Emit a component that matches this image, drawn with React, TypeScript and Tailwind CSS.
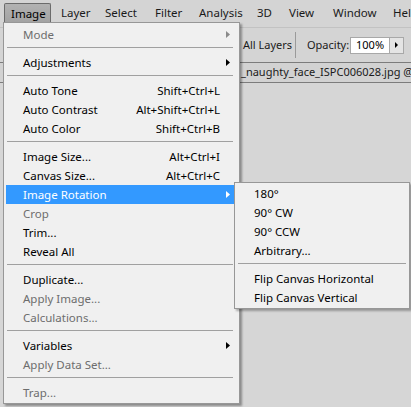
import React from "react";

type Item =
  | { sep: true }
  | { label: string; key?: string; off?: boolean; sub?: boolean; hot?: boolean };

const MENU: Item[] = [
  { label: "Mode", off: true, sub: true },
  { sep: true },
  { label: "Adjustments", sub: true },
  { sep: true },
  { label: "Auto Tone", key: "Shift+Ctrl+L" },
  { label: "Auto Contrast", key: "Alt+Shift+Ctrl+L" },
  { label: "Auto Color", key: "Shift+Ctrl+B" },
  { sep: true },
  { label: "Image Size...", key: "Alt+Ctrl+I" },
  { label: "Canvas Size...", key: "Alt+Ctrl+C" },
  { label: "Image Rotation", sub: true, hot: true },
  { label: "Crop", off: true },
  { label: "Trim..." },
  { label: "Reveal All" },
  { sep: true },
  { label: "Duplicate..." },
  { label: "Apply Image...", off: true },
  { label: "Calculations...", off: true },
  { sep: true },
  { label: "Variables", sub: true },
  { label: "Apply Data Set...", off: true },
  { sep: true },
  { label: "Trap...", off: true },
];

const ROTATE: Item[] = [
  { label: "180°" },
  { label: "90° CW" },
  { label: "90° CCW" },
  { label: "Arbitrary..." },
  { sep: true },
  { label: "Flip Canvas Horizontal" },
  { label: "Flip Canvas Vertical" },
];

// menubar: [width of item, label]
const BAR: [string, string][] = [
  ["w-[50px]", "Image"],
  ["w-[44px]", "Layer"],
  ["w-[50px]", "Select"],
  ["w-[44px]", "Filter"],
  ["w-[58px]", "Analysis"],
  ["w-[32px]", "3D"],
  ["w-[44px]", "View"],
  ["w-[60px]", "Window"],
  ["w-[40px]", "Help"],
];

function Arrow({ color }: { color: string }) {
  return (
    <svg width="4" height="7" viewBox="0 0 4 7" className="absolute right-[4px] top-[6px]">
      <polygon points="0,0 4,3.5 0,7" fill={color} />
    </svg>
  );
}

function Sep() {
  return (
    <div className="h-[9px] pt-[3px] pl-[1px] pr-[1px]">
      <div className="h-px bg-[#a0a0a0]" />
    </div>
  );
}

function Row({ it }: { it: Extract<Item, { label: string }> }) {
  const text = it.hot ? "text-white" : it.off ? "text-[#6d6d6d]" : "text-black";
  return (
    <div
      className={`relative flex h-[19px] items-center justify-between pl-[17px] pr-[14px] leading-[19px] ${text} ${
        it.hot ? "bg-[#3399ff]" : ""
      }`}
    >
      <span>{it.label}</span>
      {it.key && <span>{it.key}</span>}
      {it.sub && <Arrow color={it.hot ? "#ffffff" : it.off ? "#8a8a8a" : "#000000"} />}
    </div>
  );
}

export default function App() {
  return (
    <div className="relative h-[407px] w-[411px] overflow-hidden bg-[#d6d6d6] font-['Noto_Sans',sans-serif] text-[11.5px] text-black">
      {/* menu bar */}
      <div className="flex h-[27px] whitespace-nowrap pl-[4px] pt-[3px] bg-[#d4d4d4]">
        {BAR.map(([w, label], i) => (
          <div key={label} className={`${w} shrink-0`}>
            {i === 0 ? (
              <div className="h-[20px] w-[47px] rounded-t-[2px] border border-b-0 border-[#6b6b6b] bg-gradient-to-b from-[#b2b2b2] to-[#a2a2a2] pl-[6px] leading-[19px]">
                {label}
              </div>
            ) : (
              <div className="pl-[7px] leading-[20px] text-[#1a1a1a]">{label}</div>
            )}
          </div>
        ))}
      </div>

      {/* options bar */}
      <div className="flex h-[35px] items-center whitespace-nowrap border-t border-[#c2c2c2] bg-[#d4d4d4] pl-[243px] text-[11px] text-[#1a1a1a]">
        <span className="w-[52px] shrink-0">All Layers</span>
        <div className="mr-[11px] h-[26px] w-px shrink-0 bg-[#9a9a9a]" />
        <span className="w-[43px] shrink-0">Opacity:</span>
        <div className="flex h-[17px] w-[54px] shrink-0 items-center border border-[#a8a8a8] bg-white">
          <span className="w-[38px] pl-[5px] text-black">100%</span>
          <div className="flex h-full flex-1 items-center justify-center border-l border-[#a8a8a8] bg-[#e4e4e4]">
            <svg width="3" height="6" viewBox="0 0 3 6">
              <polygon points="0,0 3,3 0,6" fill="#000" />
            </svg>
          </div>
        </div>
      </div>

      {/* document tab row */}
      <div className="flex h-[21px] items-center whitespace-nowrap border-y border-[#7c7c7c] bg-[#d2d2d2] pl-[241px] text-[11px] text-[#1a1a1a]">
        _naughty_face_ISPC006028.jpg @
      </div>

      {/* main dropdown */}
      <div className="absolute left-[3px] top-[22px] w-[237px] whitespace-nowrap border border-[#979797] bg-[#f0f0f0] pb-[1px] pl-[2px] pr-[5px] pt-[2px] shadow-[2px_2px_2px_rgba(0,0,0,0.35)]">
        {MENU.map((it, i) => ("sep" in it ? <Sep key={i} /> : <Row key={i} it={it} />))}
      </div>

      {/* Image Rotation submenu */}
      <div className="absolute left-[234px] top-[182px] w-[176px] whitespace-nowrap border border-[#979797] bg-[#f0f0f0] pb-[1px] pl-[2px] pr-[2px] pt-[1px] shadow-[2px_2px_2px_rgba(0,0,0,0.3)]">
        {ROTATE.map((it, i) => ("sep" in it ? <Sep key={i} /> : <Row key={i} it={it} />))}
      </div>
    </div>
  );
}
